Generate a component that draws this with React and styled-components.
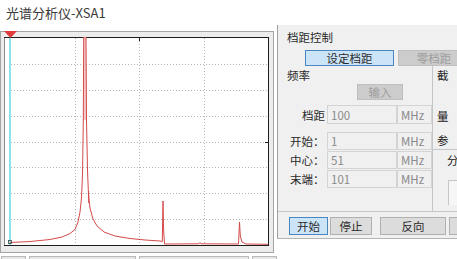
import React from 'react';
import styled, { createGlobalStyle } from 'styled-components';

const GlobalStyle = createGlobalStyle`
  html, body {
    margin: 0;
    padding: 0;
    background: #ffffff;
  }
  body {
    font-family: "Noto Sans CJK SC", "Noto Sans", sans-serif;
  }
  * {
    box-sizing: border-box;
  }
`;

const StPage = styled.div`
  width: 457px;
  height: 259px;
  overflow: hidden;
  display: flex;
  flex-direction: column;
  background: #ffffff;
`;

const StTitle = styled.div`
  height: 25px;
  padding-left: 6px;
  font-size: 13px;
  line-height: 26px;
  color: #3a3a3a;
`;

const StMain = styled.div`
  display: flex;
  height: 234px;
`;

const StScopeCol = styled.div`
  width: 277px;
  padding-top: 6px;
  display: flex;
  flex-direction: column;
`;

const StScopeFrame = styled.div`
  position: relative;
  width: 274px;
  height: 222px;
  padding: 5px 3px 6px 3px;
  border: 1px solid #a5a5a5;
  background: #ececec;
`;

const StMarker = styled.svg`
  position: absolute;
  left: 3px;
  top: -1px;
`;

const StScopeBar = styled.div`
  display: flex;
  gap: 3px;
  margin-top: 3px;
  padding-left: 1px;
`;

const StBarCell = styled.div`
  width: ${(p) => p.$w}px;
  height: 12px;
  border: 1px solid #b9b9b9;
  background: #e6e6e6;
`;

const StPanel = styled.div`
  width: 180px;
  height: 214px;
  overflow: hidden;
  background: #f0f0f0;
  border-left: 1px solid #a0a0a0;
  border-bottom: 1px solid #b4b4b4;
  display: flex;
  flex-direction: column;
  font-size: 11.5px;
  color: #2a2a2a;
`;

const StGroupLabel = styled.div`
  margin-top: ${(p) => p.$mt || 0}px;
  padding-left: 9px;
  height: 14px;
  line-height: 14px;
  white-space: nowrap;
`;

const StButtonRow = styled.div`
  display: flex;
  gap: 4px;
  margin-top: 6px;
  padding-left: 27px;
`;

const StBtn = styled.div`
  flex: none;
  width: ${(p) => p.$w}px;
  height: ${(p) => p.$h || 16}px;
  margin-top: ${(p) => p.$mt || 0}px;
  margin-left: ${(p) => p.$ml || 0}px;
  display: flex;
  align-items: center;
  justify-content: center;
  font-size: 11.5px;
  white-space: nowrap;
  border: 1px solid
    ${(p) => (p.$variant === 'primary' ? '#4a86c0' : p.$variant === 'disabled' ? '#bfbfbf' : '#b0b0b0')};
  background: ${(p) => (p.$variant === 'primary' ? '#cce4f7' : p.$variant === 'disabled' ? '#cccccc' : '#dcdcdc')};
  color: ${(p) => (p.$variant === 'disabled' ? '#9c9c9c' : '#2a2a2a')};
`;

const StBody = styled.div`
  display: flex;
  height: 145px;
`;

const StFreqGroup = styled.div`
  width: 160px;
  border-right: 1px solid #c6c6c6;
  display: flex;
  flex-direction: column;
`;

const StInputRow = styled.div`
  display: flex;
  height: ${(p) => p.$h || 18}px;
  margin-top: ${(p) => p.$mt || 1}px;
`;

const StFieldLabel = styled.div`
  width: 49px;
  display: flex;
  align-items: center;
  justify-content: ${(p) => (p.$right ? 'flex-end' : 'flex-start')};
  padding: ${(p) => (p.$right ? '0 2px 0 0' : '0 0 0 12px')};
  white-space: nowrap;
`;

const StField = styled.div`
  width: ${(p) => p.$w}px;
  height: 100%;
  border: 1px solid #d4d4d4;
  background: #f0f0f0;
  color: #8a8a8a;
  display: flex;
  align-items: center;
  padding-left: 3px;
`;

const StSideCol = styled.div`
  flex: 1;
  display: flex;
  flex-direction: column;
`;

const StSideLabel = styled.div`
  margin-top: ${(p) => p.$mt}px;
  padding-left: ${(p) => p.$pl || 4}px;
  height: 14px;
  line-height: 14px;
  color: #1a1a1a;
  white-space: nowrap;
`;

const StSideBox = styled.div`
  flex: 1;
  margin-top: 2px;
  border-top: 1px solid #c6c6c6;
  display: flex;
  flex-direction: column;
`;

const StInnerBox = styled.div`
  margin: 13px 0 6px 15px;
  flex: 1;
  border-top: 1px solid #c6c6c6;
  border-left: 1px solid #c6c6c6;
  background: #f6f6f6;
`;

const StBottomBar = styled.div`
  display: flex;
  height: 27px;
  border-top: 1px solid #c6c6c6;
  padding-left: 11px;
`;

const StSep = styled.div`
  width: 1px;
  margin: 0 3px 0 5px;
  background: #c6c6c6;
`;

// 그래프 좌표 (svg 기준) ------------------------------
const spectrum = [
  [6, 205.5], [26, 204.5], [46, 202.5], [58, 200], [66, 196.5], [71, 192.5],
  [74, 185], [76, 175], [77.5, 161], [78.5, 138], [79.3, 83], [79.7, 0],
  [82, 0], [82.5, 83], [83.5, 133], [84.5, 158], [86, 171], [89, 182],
  [93, 189], [100, 195], [111, 199], [126, 201.5], [141, 203], [156, 204],
  [158.3, 204.5], [159, 164], [159.6, 193], [160.5, 207], [195, 206.8],
  [196, 205.5], [197, 206.8], [234.5, 207], [235.5, 185], [236.3, 199],
  [238, 205], [242, 207], [264, 207.3],
];

const vGrid = [71.5, 135.5, 200.5];
const hGrid = [27.5, 53.5, 79.5, 105.5, 130.5, 156.5, 182.5];

function Plot() {
  const d = spectrum.map((pt, i) => `${i ? 'L' : 'M'}${pt[0]} ${pt[1]}`).join(' ');
  return (
    <svg width="265" height="209" style={{ display: 'block' }}>
      <rect x="0" y="0" width="265" height="209" fill="#ffffff" />
      {vGrid.map((x) => (
        <line key={x} x1={x} y1="1" x2={x} y2="208" stroke="#b4b4b4" strokeDasharray="1 2" />
      ))}
      {hGrid.map((y) => (
        <line key={y} x1="7" y1={y} x2="264" y2={y} stroke="#b4b4b4" strokeDasharray="1 2" />
      ))}
      <line x1="0.5" y1="0" x2="0.5" y2="209" stroke="#8c8c8c" />
      <line x1="0" y1="0.5" x2="265" y2="0.5" stroke="#1e1e1e" />
      <line x1="264.5" y1="0" x2="264.5" y2="209" stroke="#1e1e1e" />
      <line x1="0" y1="208.5" x2="265" y2="208.5" stroke="#1e1e1e" />
      <line x1="135.5" y1="1" x2="135.5" y2="4" stroke="#1e1e1e" />
      <line x1="261" y1="105.5" x2="264" y2="105.5" stroke="#1e1e1e" />
      <rect x="5" y="1" width="2" height="207" fill="#8fe3ea" />
      <polygon points="79.7,0 82,0 82.5,83 79.3,83" fill="#f4c9c9" />
      <path d={d} fill="none" stroke="#d44a4a" strokeWidth="1" />
      <line x1="84.7" y1="154" x2="84.7" y2="166" stroke="#d44a4a" />
      <rect x="4.5" y="203.5" width="3" height="3" fill="none" stroke="#444" strokeWidth="0.8" />
    </svg>
  );
}

function App() {
  const rows = [
    { label: '开始：', value: '1' },
    { label: '中心：', value: '51' },
    { label: '末端：', value: '101' },
  ];

  return (
    <>
      <GlobalStyle />
      <StPage>
        <StTitle>光谱分析仪-XSA1</StTitle>
        <StMain>
          <StScopeCol>
            <StScopeFrame>
              <StMarker width="13" height="7">
                <polygon points="0,0 13,0 6.5,7" fill="#e03a3a" />
              </StMarker>
              <Plot />
            </StScopeFrame>
            <StScopeBar>
              <StBarCell $w={25} />
              <StBarCell $w={107} />
              <StBarCell $w={110} />
              <StBarCell $w={25} />
            </StScopeBar>
          </StScopeCol>

          <StPanel>
            <StGroupLabel $mt={5}>档距控制</StGroupLabel>
            <StButtonRow>
              <StBtn $variant="primary" $w={89}>设定档距</StBtn>
              <StBtn $variant="disabled" $w={72}>零档距</StBtn>
            </StButtonRow>

            <StBody>
              <StFreqGroup>
                <StGroupLabel $mt={2}>频率</StGroupLabel>
                <StBtn $variant="disabled" $w={46} $mt={2} $ml={79}>输入</StBtn>
                <StInputRow $h={19} $mt={5}>
                  <StFieldLabel $right>档距</StFieldLabel>
                  <StField $w={70}>100</StField>
                  <StField $w={35}>MHz</StField>
                </StInputRow>
                {rows.map((r, i) => (
                  <StInputRow key={r.label} $mt={i === 0 ? 8 : 1}>
                    <StFieldLabel>{r.label}</StFieldLabel>
                    <StField $w={70}>{r.value}</StField>
                    <StField $w={35}>MHz</StField>
                  </StInputRow>
                ))}
              </StFreqGroup>

              <StSideCol>
                <StSideLabel $mt={2}>截</StSideLabel>
                <StSideLabel $mt={27}>量</StSideLabel>
                <StSideLabel $mt={10}>参</StSideLabel>
                <StSideBox>
                  <StSideLabel $mt={3} $pl={14}>分</StSideLabel>
                  <StInnerBox />
                </StSideBox>
              </StSideCol>
            </StBody>

            <StBottomBar>
              <StBtn $variant="primary" $w={39} $h={18} $mt={5}>开始</StBtn>
              <StBtn $w={42} $h={18} $mt={5} $ml={2}>停止</StBtn>
              <StSep />
              <StBtn $w={66} $h={18} $mt={5}>反向</StBtn>
              <StBtn $w={30} $h={18} $mt={5} $ml={3}></StBtn>
            </StBottomBar>
          </StPanel>
        </StMain>
      </StPage>
    </>
  );
}

export default App;
